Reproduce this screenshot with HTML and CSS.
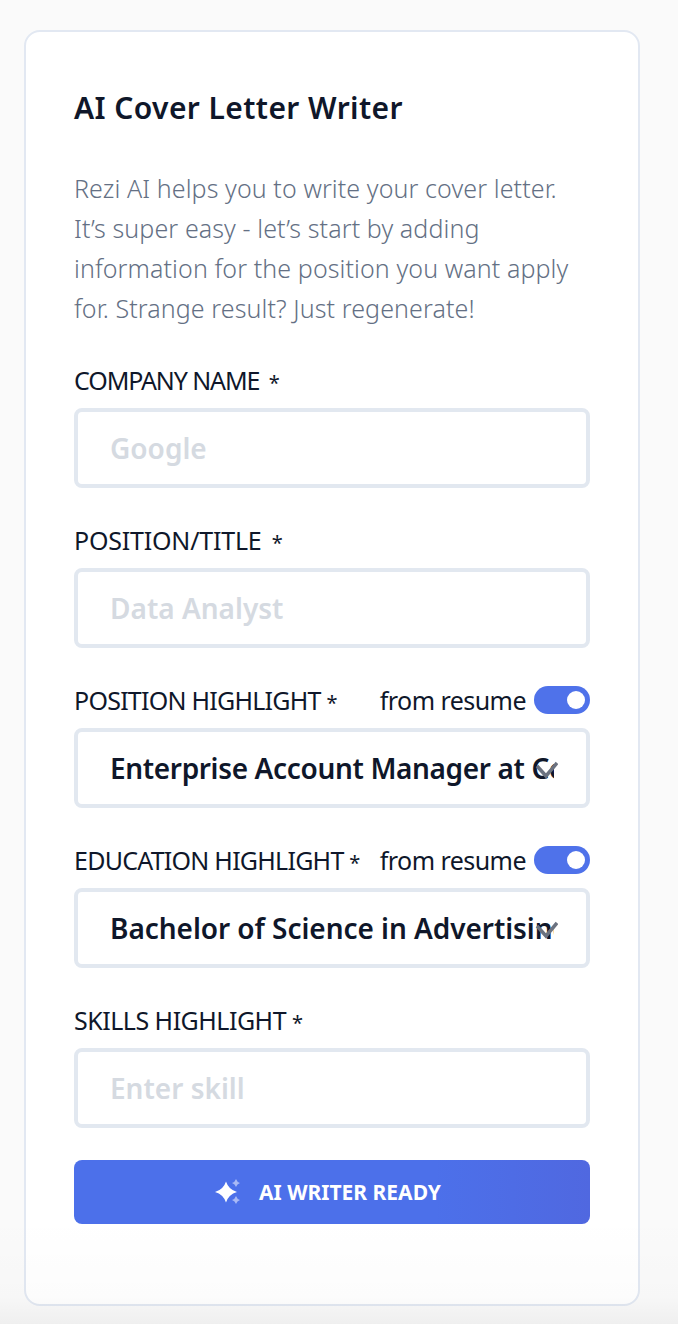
FILE: index.html
```html
<!DOCTYPE html>
<html lang="en">
  <head>
    <meta charset="UTF-8" />
    <meta name="viewport" content="width=device-width, initial-scale=1.0" />
    <title>AI Cover Letter Writer</title>
    <link rel="stylesheet" href="styles.css">
  </head>
  <body>
    <div class="card">
      <h1 class="title">AI Cover Letter Writer</h1>
      <p class="intro">Rezi AI helps you to write your cover letter.<br />It’s super easy - let’s start by adding<br />information for the position you want apply<br />for. Strange result? Just regenerate!</p>

      <div class="field">
        <div class="field-head">
          <label class="label label-company" for="company">COMPANY NAME <span class="star star-gap">*</span></label>
        </div>
        <input class="input" id="company" type="text" placeholder="Google" />
      </div>

      <div class="field">
        <div class="field-head">
          <label class="label label-title" for="position">POSITION/TITLE <span class="star star-gap">*</span></label>
        </div>
        <input class="input" id="position" type="text" placeholder="Data Analyst" />
      </div>

      <div class="field">
        <div class="field-head">
          <label class="label" for="highlight">POSITION HIGHLIGHT <span class="star">*</span></label>
          <div class="resume">
            <span>from resume</span>
            <span class="toggle"><span class="knob"></span></span>
          </div>
        </div>
        <div class="select">
          <input class="input" id="highlight" type="text" value="Enterprise Account Manager at Company" />
          <svg class="check" viewBox="0 0 24 24" width="24" height="24" fill="none" stroke="#6b7280" stroke-width="3.5"><path d="M3 10l9 10L23 7" /></svg>
        </div>
      </div>

      <div class="field">
        <div class="field-head">
          <label class="label" for="education">EDUCATION HIGHLIGHT <span class="star">*</span></label>
          <div class="resume">
            <span>from resume</span>
            <span class="toggle"><span class="knob"></span></span>
          </div>
        </div>
        <div class="select">
          <input class="input input-wide" id="education" type="text" value="Bachelor of Science in Advertising" />
          <svg class="check" viewBox="0 0 24 24" width="24" height="24" fill="none" stroke="#6b7280" stroke-width="3.5"><path d="M3 10l9 10L23 7" /></svg>
        </div>
      </div>

      <div class="field">
        <div class="field-head">
          <label class="label label-skills" for="skills">SKILLS HIGHLIGHT <span class="star">*</span></label>
        </div>
        <input class="input" id="skills" type="text" placeholder="Enter skill" />
      </div>

      <button class="submit" type="button">
        <svg viewBox="0 0 28 28" width="28" height="28">
          <path fill="#fff" d="M12 3.500Q14.500 11.500 23 14 14.500 16.500 12 24.500 9.500 16.500 1 14 9.500 11.500 12 3.500z" />
          <path fill="#a9b9f5" d="M22 1Q23 4 26 5 23 6 22 9 21 6 18 5 21 4 22 1zM22 18Q23 21 26 22 23 23 22 26 21 23 18 22 21 21 22 18z" />
        </svg>
        AI WRITER READY
      </button>
    </div>
  </body>
</html>
```

FILE: styles.css
```css
* {
  padding: 0;
  margin: 0;
  box-sizing: border-box;
}
body {
  position: relative;
  background-color: #fafafa;
  font-family: "Noto Sans", sans-serif;
  padding: 30px 38px 18px 24px;
  color: #0f172a;
}
/* soft shade along the bottom edge of the page */
body::after {
  content: "";
  position: absolute;
  left: 0;
  right: 0;
  bottom: 0;
  height: 110px;
  background: linear-gradient(rgba(0, 0, 0, 0), rgba(0, 0, 0, 0.012) 75%, rgba(0, 0, 0, 0.045));
  pointer-events: none;
}
.card {
  background-color: #fff;
  border: 2px solid #e2e8f2;
  border-radius: 16px;
  padding: 56px 48px 80px;
  height: 1276px;
}
.title {
  font-size: 30px;
  line-height: 40px;
  font-weight: 600;
  letter-spacing: 0.4px;
}
.intro {
  margin-top: 40px;
  font-size: 25px;
  line-height: 40px;
  font-weight: 300;
  letter-spacing: 0.1px;
  color: #647084;
}
.field {
  margin-top: 32px;
}
.field-head {
  display: flex;
  justify-content: space-between;
  align-items: center;
  height: 40px;
  margin-bottom: 8px;
}
.label {
  font-size: 25px;
  letter-spacing: -0.75px;
}
.label-company {
  letter-spacing: -1.1px;
}
.label-title {
  letter-spacing: -0.2px;
}
.label-skills {
  letter-spacing: -0.5px;
}
.star {
  font-size: 20px;
}
.star-gap {
  margin-left: 4px;
}
.resume {
  display: flex;
  align-items: center;
  gap: 8px;
  font-size: 25px;
  letter-spacing: -0.55px;
}
.toggle {
  display: flex;
  align-items: center;
  justify-content: flex-end;
  width: 56px;
  height: 28px;
  padding-right: 5px;
  border-radius: 14px;
  background-color: #4f72ea;
}
.knob {
  width: 18px;
  height: 18px;
  border-radius: 50%;
  background-color: #fff;
}
.input {
  display: block;
  width: 100%;
  height: 80px;
  padding: 0 32px;
  border: 4px solid #e2e8f0;
  border-radius: 8px;
  background-color: #fff;
  font-family: inherit;
  font-size: 28px;
  font-weight: 600;
  letter-spacing: -0.35px;
  color: #0f172a;
  outline: none;
}
.input-wide {
  letter-spacing: -0.05px;
}
.input::placeholder {
  color: #d5dae1;
  letter-spacing: 0;
  opacity: 1;
}
.select {
  position: relative;
}
.check {
  position: absolute;
  top: 28px;
  right: 32px;
}
.submit {
  display: flex;
  align-items: center;
  justify-content: center;
  gap: 17px;
  width: 100%;
  height: 64px;
  margin-top: 32px;
  padding-right: 9px;
  border: none;
  border-radius: 8px;
  background: linear-gradient(90deg, #4c70ea 70%, #5068e0);
  color: #fff;
  font-family: inherit;
  font-size: 21px;
  font-weight: 700;
}
```
